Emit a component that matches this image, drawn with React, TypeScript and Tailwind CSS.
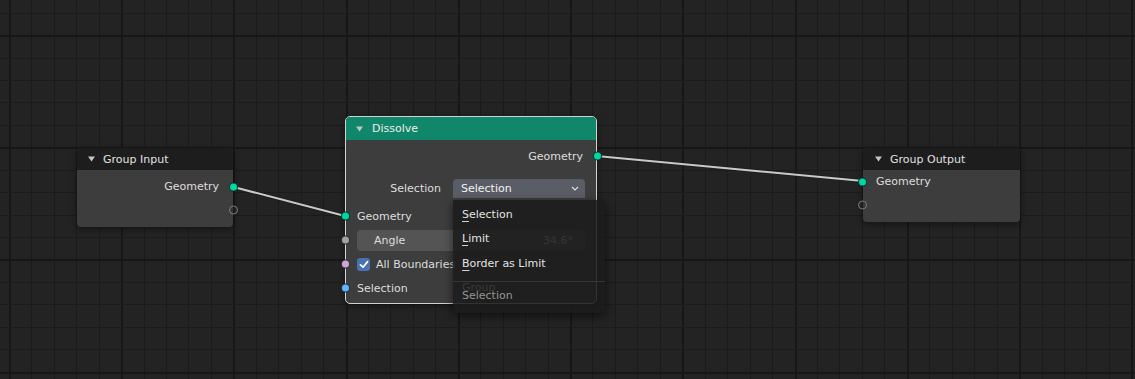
import React from "react";

const W = 1135;
const H = 379;

function Grid() {
  const v: { x: number; major: boolean }[] = [];
  for (let k = 0; k < 60; k++) {
    const x = 9.3 + 22.45 * k;
    if (x > W) break;
    v.push({ x, major: (k - 5) % 5 === 0 });
  }
  const h: { y: number; major: boolean }[] = [];
  for (let k = 0; k < 30; k++) {
    const y = 13.3 + 22.42 * k;
    if (y > H) break;
    h.push({ y, major: (k - 1) % 5 === 0 });
  }
  return (
    <svg className="absolute inset-0" width={W} height={H} shapeRendering="crispEdges">
      {v.map((l, i) => (
        <rect
          key={"v" + i}
          x={Math.floor(l.x)}
          y={0}
          width={l.major ? 2 : 1}
          height={H}
          fill={l.major ? "#171717" : "#1b1b1b"}
        />
      ))}
      {h.map((l, i) => (
        <rect
          key={"h" + i}
          x={0}
          y={Math.floor(l.y)}
          width={W}
          height={l.major ? 2 : 1}
          fill={l.major ? "#171717" : "#1b1b1b"}
        />
      ))}
    </svg>
  );
}

function Tri() {
  return (
    <svg width="7" height="6" viewBox="0 0 7 6" className="shrink-0">
      <polygon points="0,0.5 7,0.5 3.5,5.5" fill="#c4c4c4" />
    </svg>
  );
}

function Socket({ side, color, hollow }: { side: "left" | "right"; color?: string; hollow?: boolean }) {
  const pos = side === "left" ? "left-[-5px]" : "right-[-5px]";
  if (hollow) {
    return (
      <span
        className={`absolute ${pos} top-1/2 -translate-y-1/2 w-[9px] h-[9px] rounded-full border border-[#7d7d7d] bg-[#2e2e2e]/40`}
      />
    );
  }
  return (
    <span
      className={`absolute ${pos} top-1/2 -translate-y-1/2 w-[9px] h-[9px] rounded-full border border-black/70`}
      style={{ backgroundColor: color }}
    />
  );
}

function Links() {
  return (
    <svg className="absolute inset-0" width={W} height={H}>
      <line x1={233.5} y1={187} x2={345} y2={216} stroke="#1a1a1a" strokeOpacity={0.5} strokeWidth={4} />
      <line x1={233.5} y1={187} x2={345} y2={216} stroke="#c9c9c9" strokeWidth={2} />
      <line x1={596.5} y1={156} x2={863} y2={181} stroke="#1a1a1a" strokeOpacity={0.5} strokeWidth={4} />
      <line x1={596.5} y1={156} x2={863} y2={181} stroke="#c9c9c9" strokeWidth={2} />
    </svg>
  );
}

function Check() {
  return (
    <span className="flex items-center justify-center w-[13px] h-[13px] rounded-[3px] bg-[#4772b3]">
      <svg width="10" height="9" viewBox="0 0 10 9">
        <polyline points="1.5,4.8 4,7.2 8.6,1.6" fill="none" stroke="#ffffff" strokeWidth="1.7" strokeLinecap="round" strokeLinejoin="round" />
      </svg>
    </span>
  );
}

function Chevron() {
  return (
    <svg width="8" height="5" viewBox="0 0 8 5">
      <polyline points="1,1 4,4 7,1" fill="none" stroke="#e0e0e0" strokeWidth="1.2" />
    </svg>
  );
}

function MenuItem({ first, rest }: { first: string; rest: string }) {
  return (
    <div className="h-[24.5px] flex items-center pl-[9px] text-[#e2e2e2]">
      <span className="underline decoration-1 underline-offset-[3px] decoration-[#d0d0d0]">{first}</span>
      <span>{rest}</span>
    </div>
  );
}

export default function App() {
  return (
    <div className="relative w-[1135px] h-[379px] overflow-hidden bg-[#232323] font-['DejaVu_Sans','Liberation_Sans',sans-serif] text-[11px] leading-none text-[#dedede]">
      <Grid />
      <Links />

      {/* Group Input */}
      <div className="absolute left-[77px] top-[148px] w-[156px] rounded-[4px] bg-[#3d3d3d] shadow-[0_2px_6px_rgba(0,0,0,0.45)]">
        <div className="flex items-center gap-[8px] h-[22px] pl-[11px] rounded-t-[4px] bg-[#1d1d1d] text-[#e0e0e0]">
          <Tri />
          <span>Group Input</span>
        </div>
        <div className="pt-[5px] pb-[6px]">
          <div className="relative h-[23px] flex items-center justify-end pr-[14px]">
            <span>Geometry</span>
            <Socket side="right" color="#00d6a3" />
          </div>
          <div className="relative h-[23px]">
            <Socket side="right" hollow />
          </div>
        </div>
      </div>

      {/* Group Output */}
      <div className="absolute left-[863px] top-[148px] w-[157px] rounded-[4px] bg-[#3d3d3d] shadow-[0_2px_6px_rgba(0,0,0,0.45)]">
        <div className="flex items-center gap-[8px] h-[22px] pl-[12px] rounded-t-[4px] bg-[#1d1d1d] text-[#e0e0e0]">
          <Tri />
          <span>Group Output</span>
        </div>
        <div className="pb-[6px]">
          <div className="relative h-[23px] flex items-center pl-[13px]">
            <span>Geometry</span>
            <Socket side="left" color="#00d6a3" />
          </div>
          <div className="relative h-[23px]">
            <Socket side="left" hollow />
          </div>
        </div>
      </div>

      {/* Dissolve */}
      <div className="absolute left-[345px] top-[116px] w-[252px] h-[188px] rounded-[5px] border border-[#d2d2d2] bg-[#3d3d3d] shadow-[0_2px_6px_rgba(0,0,0,0.45)]">
        <div className="flex items-center gap-[9px] h-[23px] pl-[10px] rounded-t-[4px] bg-[#10876a] text-[#ececec]">
          <Tri />
          <span>Dissolve</span>
        </div>
        <div className="pt-[4px]">
          <div className="relative h-[24px] flex items-center justify-end pr-[13px]">
            <span>Geometry</span>
            <span className="absolute right-[-5.5px] top-1/2 -translate-y-1/2 w-[9px] h-[9px] rounded-full border border-black/70 bg-[#00d6a3]" />
          </div>
          <div className="flex items-center mt-[11px] px-[11px] h-[19px]">
            <span className="w-[96px] pr-[12px] text-right">Selection</span>
            <div className="flex-1 h-[19px] flex items-center justify-between pl-[8px] pr-[6px] rounded-t-[4px] bg-[#5a5d65] text-[#f2f2f2]">
              <span>Selection</span>
              <Chevron />
            </div>
          </div>
          <div className="relative h-[24px] mt-[6px] flex items-center pl-[11px]">
            <span>Geometry</span>
            <span className="absolute left-[-5.5px] top-1/2 -translate-y-1/2 w-[9px] h-[9px] rounded-full border border-black/70 bg-[#00d6a3]" />
          </div>
          <div className="relative h-[24px] flex items-center px-[11px]">
            <div className="flex-1 h-[21px] flex items-center justify-between pl-[17px] pr-[12px] rounded-[4px] bg-[#545454]">
              <span>Angle</span>
              <span>34.6°</span>
            </div>
            <span className="absolute left-[-5.5px] top-1/2 -translate-y-1/2 w-[9px] h-[9px] rounded-full border border-black/70 bg-[#a1a1a1]" />
          </div>
          <div className="relative h-[24px] flex items-center gap-[6px] pl-[11px]">
            <Check />
            <span>All Boundaries</span>
            <span className="absolute left-[-5.5px] top-1/2 -translate-y-1/2 w-[9px] h-[9px] rounded-full border border-black/70 bg-[#cca6d6]" />
          </div>
          <div className="relative h-[24px] flex items-center pl-[11px]">
            <span>Selection</span>
            <span className="absolute left-[-5.5px] top-1/2 -translate-y-1/2 w-[9px] h-[9px] rounded-full border border-black/70 bg-[#63b3f5]" />
          </div>
        </div>
      </div>

      {/* Dropdown menu */}
      <div className="absolute left-[453px] top-[200px] w-[152px] h-[113px] rounded-b-[4px] bg-[#1b1b1b]/[0.88] shadow-[0_3px_10px_rgba(0,0,0,0.55)] pt-[2px]">
        <MenuItem first="S" rest="election" />
        <MenuItem first="L" rest="imit" />
        <MenuItem first="B" rest="order as Limit" />
        <div className="mt-[5px] h-px bg-[#363636]" />
        <div className="relative h-[28px] flex items-center pl-[9px] text-[#959595]">
          <span className="absolute left-[9px] top-0 text-[#3a3a3a]">Group</span>
          <span className="relative">Selection</span>
        </div>
      </div>
    </div>
  );
}
